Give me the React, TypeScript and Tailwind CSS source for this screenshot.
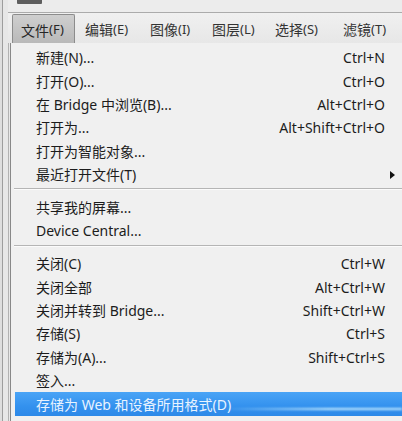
import { ReactNode } from "react";

type Item = { label: string; shortcut?: string; sub?: boolean };

const groups: Item[][] = [
    [
        { label: "新建(N)...", shortcut: "Ctrl+N" },
        { label: "打开(O)...", shortcut: "Ctrl+O" },
        { label: "在 Bridge 中浏览(B)...", shortcut: "Alt+Ctrl+O" },
        { label: "打开为...", shortcut: "Alt+Shift+Ctrl+O" },
        { label: "打开为智能对象..." },
        { label: "最近打开文件(T)", sub: true },
    ],
    [{ label: "共享我的屏幕..." }, { label: "Device Central..." }],
    [
        { label: "关闭(C)", shortcut: "Ctrl+W" },
        { label: "关闭全部", shortcut: "Alt+Ctrl+W" },
        { label: "关闭并转到 Bridge...", shortcut: "Shift+Ctrl+W" },
        { label: "存储(S)", shortcut: "Ctrl+S" },
        { label: "存储为(A)...", shortcut: "Shift+Ctrl+S" },
        { label: "签入..." },
    ],
];

const menus = [
    { label: "编辑", key: "(E)", w: "w-[65px]" },
    { label: "图像", key: "(I)", w: "w-[62px]" },
    { label: "图层", key: "(L)", w: "w-[63px]" },
    { label: "选择", key: "(S)", w: "w-[68px]" },
    { label: "滤镜", key: "(T)", w: "w-[60px]" },
];

function Row({ children, right }: { children: ReactNode; right?: ReactNode }) {
    return (
        <div className="h-[23.4px] flex items-center pl-[21px] pr-[17px]">
            <span className="flex-1 whitespace-nowrap">{children}</span>
            {right}
        </div>
    );
}

function Separator() {
    return (
        <div className="h-[9.5px] pt-[2px] -ml-[1px]">
            <div className="h-px bg-[#b5b5b5]" />
            <div className="h-px bg-[#fbfbfb]" />
        </div>
    );
}

function App() {
    return (
        <div
            className="w-[402px] h-[421px] overflow-hidden flex bg-[#e8e8e8] text-[#1c1c1c]"
            style={{ fontFamily: '"Noto Sans", "Noto Sans CJK SC", sans-serif' }}
        >
            {/* left window edge */}
            <div className="w-[8px] shrink-0 flex">
                <div className="w-[2px] bg-[#dedede]" />
                <div className="w-px bg-[#9d9d9d]" />
                <div className="flex-1 bg-[#e7e7e7]" />
            </div>

            <div className="flex-1 min-w-0 flex flex-col">
                {/* top strip */}
                <div className="h-[12px] bg-[#ececec]">
                    <div className="ml-[9px] w-[25px] h-[4px] rounded-b-[1px] bg-[#5e5e5e]" />
                </div>
                <div className="h-px bg-[#ababab]" />

                {/* menu bar */}
                <div className="h-[30px] flex items-end pl-[4px] bg-[linear-gradient(to_bottom,#f0f0f0,#e7e7e7)] text-[14px] text-[#333333]">
                    <div className="w-[63px] h-[29px] flex items-center pl-[8px] pt-[2px] rounded-t-[2px] border border-b-0 border-[#8c8c8c] bg-[linear-gradient(to_bottom,#cfcfcf,#b9b9b9)] text-[#262626]">
                        文件<span className="text-[13px]">(F)</span>
                    </div>
                    {menus.map((m) => (
                        <div
                            key={m.label}
                            className={`${m.w} h-[29px] flex items-center pl-[10px] pt-[2px] whitespace-nowrap`}
                        >
                            {m.label}
                            <span className="text-[13px]">{m.key}</span>
                        </div>
                    ))}
                </div>

                {/* menu panel */}
                <div className="flex-1 flex min-h-0">
                    <div className="w-px bg-[#b2b2b2]" />
                    <div className="w-px bg-[#e9e9e9]" />
                    <div className="w-px bg-[#888888]" />
                    <div className="flex-1 min-w-0 bg-[#f0f0f0] pt-[3px] pl-[4px] text-[14px]">
                        {groups.map((g, i) => (
                            <div key={i}>
                                {i > 0 && <Separator />}
                                {g.map((it) => (
                                    <Row
                                        key={it.label}
                                        right={
                                            it.sub ? (
                                                <svg width="5" height="8" viewBox="0 0 5 8" className="-mr-[10px]">
                                                    <path d="M0 0 L5 4 L0 8 Z" fill="#111" />
                                                </svg>
                                            ) : (
                                                <span className="whitespace-nowrap">{it.shortcut}</span>
                                            )
                                        }
                                    >
                                        {it.label}
                                    </Row>
                                ))}
                            </div>
                        ))}
                        <div className="relative h-[23.4px] flex items-center pl-[21px] bg-[linear-gradient(to_bottom,#4aa4f6,#3391ee_60%,#2d89e8)] text-[#e8f3ff]">
                            <span className="whitespace-nowrap">存储为 Web 和设备所用格式(D)</span>
                            <div className="absolute right-0 bottom-[6px] w-[180px] h-[2px] blur-[1px] bg-[linear-gradient(to_right,rgba(190,230,255,0),#c6ecff_60%,#bfe8ff)]" />
                        </div>
                    </div>
                </div>
            </div>
        </div>
    );
}

export default App;
